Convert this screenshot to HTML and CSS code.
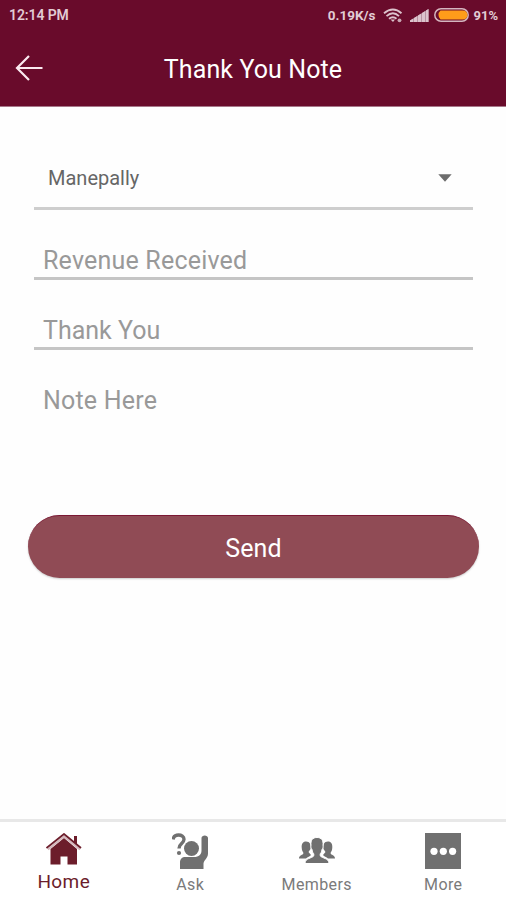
FILE: index.html
```html
<!DOCTYPE html>
<html lang="en">
<head>
<meta charset="utf-8">
<title>Thank You Note</title>
<link rel="stylesheet" href="styles.css">
</head>
<body>
<div class="app">
  <header class="top">
    <div class="status">
      <span class="time">12:14 PM</span>
      <div class="indicators">
        <span class="speed">0.19K/s</span>
        <svg class="wifi" width="20" height="15" viewBox="0 0 20 15" fill="none" stroke="#dcc3cc" stroke-width="1.900">
          <path d="M1 5.200Q10-2 18.500 5.200M3.500 8.100Q10 2.500 16 8.100M6 10.800Q10 7.500 13.500 10.800"/>
          <path d="M7.500 11.500L10 14l2-2.500z" fill="#dcc3cc" stroke="none"/>
          <circle cx="16.500" cy="12.300" r="1.900" fill="#c8a5b2" stroke="none"/>
        </svg>
        <svg class="signal" width="19" height="13" viewBox="0 0 19 13">
          <path d="M0 13v-1.500L18.500 0v13z" fill="#b792a1"/>
          <path d="M0 13v-1.500l3-1.800V13zM4 13V9l3-1.800V13zM8 13V6.500l3-1.800V13zM12 13V4l3-1.800V13zM16 13V1.600L18.500 0v13z" fill="#dcc3cc"/>
        </svg>
        <svg class="battery" width="35" height="14" viewBox="0 0 35 14">
          <rect x=".8" y=".8" width="33.400" height="12.400" rx="6.200" fill="#690b2b" stroke="#d5b6bf" stroke-width="1.500"/>
          <path d="M6.500 2.500H29a4.500 4.500 0 0 1 0 9H6.500A6 6 0 0 1 4.500 7a6 6 0 0 1 2-4.500z" fill="#ff9c1a"/>
        </svg>
        <span class="percent">91%</span>
      </div>
    </div>
    <div class="titlebar">
      <svg class="back" width="28" height="26" viewBox="0 0 28 26" fill="none" stroke="#fbeaf0" stroke-width="2.200"><path d="M27.500 13H2M14 1L2 13l12 12"/></svg>
      <h1>Thank You Note</h1>
    </div>
  </header>
  <main class="form">
    <div class="field select">
      <span class="name">Manepally</span>
      <svg width="14" height="8" viewBox="0 0 14 8"><path d="M.3.300h13.400L7 7.700z" fill="#6d6d6d"/></svg>
    </div>
    <div class="field"><span class="revenue">Revenue Received</span></div>
    <div class="field"><span class="thanks">Thank You</span></div>
    <div class="field note"><span class="note-text">Note Here</span></div>
    <button class="send"><span>Send</span></button>
  </main>
  <nav class="tabs">
    <div class="tab active">
      <svg width="36" height="38" viewBox="0 0 36 38">
        <path d="M4.500 16L18 5l13 11v15.500h-9.500V23.500h-7v8H4.500z" fill="#6c1d2b"/>
        <path d="M28 3h3v9l-3-2.500z" fill="#6c1d2b"/>
        <path d="M2 16.500L18 3.500l16 13" fill="none" stroke="#d5b8bd" stroke-width="1.800"/>
        <path d="M.5 15L18 1l17 14" fill="none" stroke="#6c1d2b" stroke-width="1.800"/>
      </svg>
      <span class="home">Home</span>
    </div>
    <div class="tab">
      <svg width="36" height="38" viewBox="0 0 36 38">
        <path d="M1 6.500C1.500 3.500 3.500 2 6.500 2c3 0 5.500 1.500 5.500 4.300 0 4.400-5 4.200-5 9.200" fill="none" stroke="#707070" stroke-width="3.400"/>
        <circle cx="7" cy="20" r="2.100" fill="#707070"/>
        <circle cx="19.500" cy="15.500" r="7.500" fill="#707070"/>
        <path d="M8 36v-6.500c0-3.500 2-5.500 5.500-5.500h8.500c5 0 7.500-2.500 7.500-6.500V5c0-3.500 6.500-3.500 6.500 0v15.500c0 5-4 6-4.500 10V36z" fill="#707070"/>
      </svg>
      <span class="ask">Ask</span>
    </div>
    <div class="tab">
      <svg width="36" height="38" viewBox="0 0 36 38" fill="#707070">
        <path d="M7 8.500c-3.200 0-4.500 2.500-4.300 6 .1 2.500.8 4 1.800 5.500-.5 2.500-4.500 1.800-4.500 5.500h7c1.500-1.500 4-2 5-3.500L9.500 19l2-3c.5-4.500-.5-7.500-4.500-7.500z"/>
        <path d="M29 8.500c3.200 0 4.500 2.500 4.300 6-.1 2.500-.8 4-1.800 5.500.5 2.500 4.500 1.800 4.500 5.500h-7c-1.500-1.500-4-2-5-3.500l2.500-3-2-3c-.5-4.500.5-7.500 4.500-7.500z"/>
        <path d="M18 4.500c-4.500 0-6.500 3-6 7.500-.2 2 0 3.500 1 4.500.3 2.500 1 3.500 1.800 4.300v2c-1.800 2.700-8.800 2.200-8.800 7.700h24c0-5.500-7-5-8.800-7.700v-2c.8-.8 1.500-1.800 1.800-4.300 1-1 1.200-2.500 1-4.500.5-4.500-1.500-7.500-6-7.500z" stroke="#fff"/>
      </svg>
      <span class="members">Members</span>
    </div>
    <div class="tab">
      <svg width="36" height="38" viewBox="0 0 36 38">
        <path d="M0 0h36v36H0z" fill="#707070"/>
        <g fill="#fff"><circle cx="9" cy="18.300" r="3.600"/><circle cx="18.300" cy="18.300" r="3.600"/><circle cx="27.600" cy="18.300" r="3.600"/></g>
      </svg>
      <span class="more">More</span>
    </div>
  </nav>
</div>
</body>
</html>
```
FILE: styles.css
```css
* { box-sizing: border-box; }
body { margin: 0; background: #fefefe; font-family: Roboto, "Liberation Sans", sans-serif; }
.app { height: 900px; display: flex; flex-direction: column; overflow: hidden; }
.top { height: 107px; background: #690b2b; border-bottom: 1px solid #a7788a; color: #fff; }
.status { height: 30px; display: flex; justify-content: space-between; align-items: center; padding: 0 8px 0 9px; font-size: 13px; font-weight: 700; color: #e2ccd4; }
.time { font-size: 14px; letter-spacing: -0.1px; font-weight: 600; }
.speed { font-size: 13.5px; }
.indicators { display: flex; align-items: center; }
.wifi { margin-left: 8px; }
.signal { margin-left: 7px; }
.battery { margin: 0 4px 0 5px; }
.titlebar { height: 76px; display: grid; grid-template-columns: 43px 1fr 43px; align-items: center; }
.back { margin-left: 15px; }
h1 { margin: 2px 0 0; font-size: 25px; font-weight: 400; letter-spacing: 0.1px; text-align: center; white-space: nowrap; }
.form { flex: 1; padding: 41px 33px 0 34px; display: flex; flex-direction: column; }
.field { height: 70px; flex: none; padding: 31px 0 0 9px; border-bottom: 3px solid #c5c5c5; font-size: 25px; line-height: 39px; color: #999; white-space: nowrap; }
.revenue, .note-text { letter-spacing: 0.2px; }
.select { height: 62px; padding: 0 21px 0 14px; display: flex; justify-content: space-between; align-items: center; font-size: 20px; color: #666; border-color: #cecece; }
.name { padding-top: 2px; }
.note { border: 0; height: 165px; }
.send { flex: none; height: 63px; margin: 0 -6px; border: 0; border-top: 1px solid #7b1834; border-radius: 32px; background: #904b55; box-shadow: 0 1px 2px #ccc; color: #fff; font: 25px Roboto, sans-serif; letter-spacing: 0.1px; padding: 3px 0 0; }
.tabs { height: 81px; border-top: 3px solid #e8e8e8; display: grid; grid-template-columns: repeat(4, 1fr); background: #fff; }
.tab { display: flex; flex-direction: column; align-items: center; padding: 11px 0 0 1px; color: #7a7a7a; font-size: 16px; line-height: 28px; letter-spacing: 0.4px; }
.tab svg { flex: none; }
.active { color: #6c1d2b; font-size: 19px; line-height: 22px; }
```
